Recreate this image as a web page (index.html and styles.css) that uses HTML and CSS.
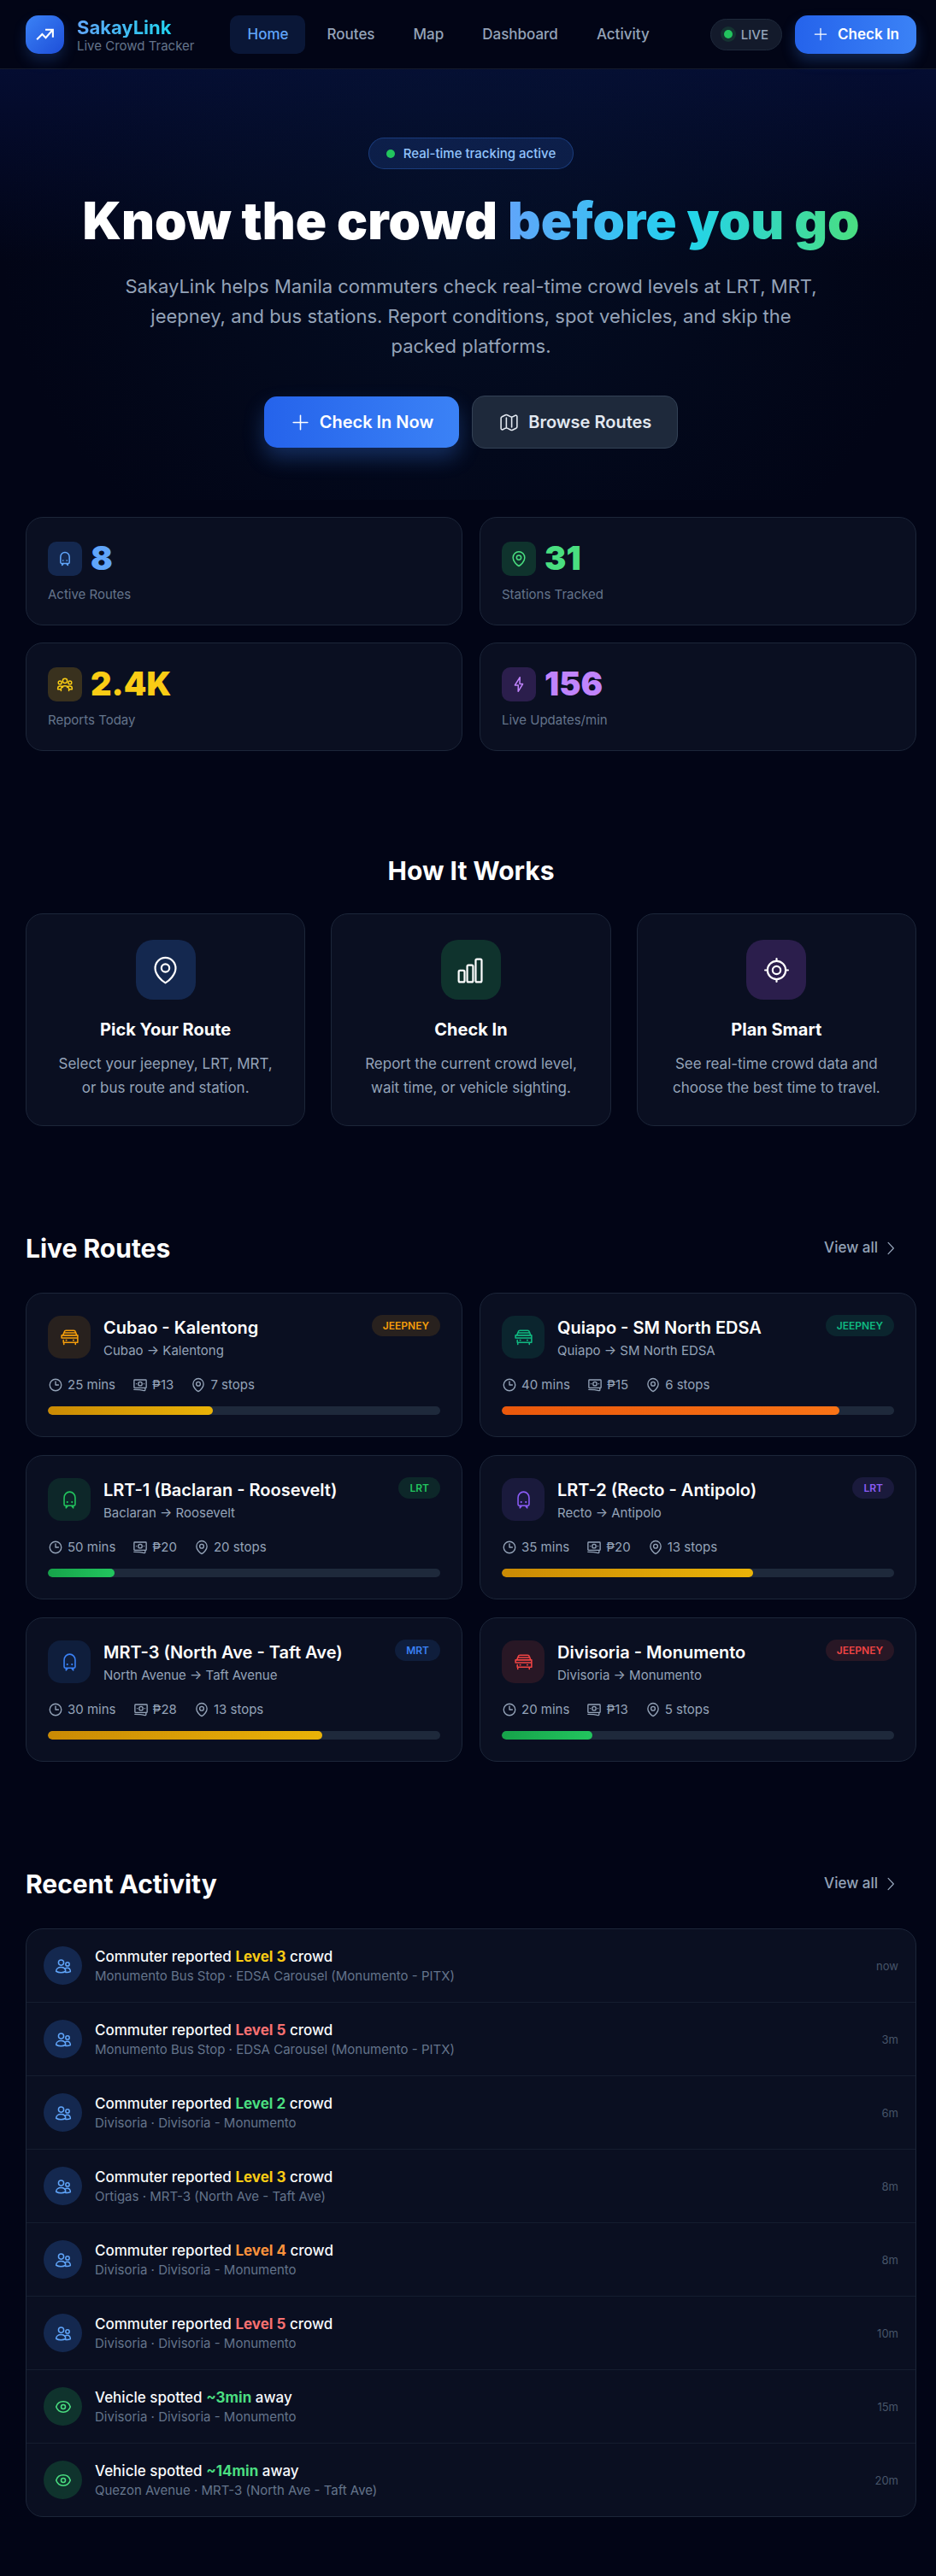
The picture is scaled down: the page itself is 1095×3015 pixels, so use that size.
FILE: index.html
```html
<!DOCTYPE html>
<html lang="en">
<head>
    <meta charset="UTF-8">
    <meta name="viewport" content="width=device-width, initial-scale=1.0">
    <title>SakayLink - Live Crowd Tracker</title>
    <link rel="stylesheet" href="styles.css">
</head>
<body>
    <!-- Icon set -->
    <svg class="sprite" aria-hidden="true">
        <symbol id="i-trend" viewBox="0 0 24 24"><path d="M3 17.5l6-6 4 4 7.5-8.5M12.500 6.500H21V15"/></symbol>
        <symbol id="i-plus" viewBox="0 0 24 24"><path d="M12 4v16M4 12h16"/></symbol>
        <symbol id="i-map" viewBox="0 0 24 24"><path d="M9 6.8v10.4M15 6.8v10.4M3 7.2c0-.8.4-1.4 1.1-1.7L8 3.6c.6-.3 1.3-.3 2 0l4 2c.6.3 1.3.3 2 0l3-1.500c.9-.5 2 .2 2 1.200v11.500c0 .8-.4 1.400-1.100 1.700L16 20.400c-.6.3-1.300.3-2 0l-4-2c-.6-.3-1.300-.3-2 0l-3 1.500c-.9.500-2-.2-2-1.200z"/></symbol>
        <symbol id="i-train" viewBox="0 0 24 24"><path d="M5.800 9.500a6.200 6.500 0 0 1 12.400 0V17a1.500 1.500 0 0 1-1.500 1.500H7.300A1.500 1.500 0 0 1 5.800 17zM8 18.500v2.500l2-2.500M16 18.500v2.500l-2-2.500"/><path d="M9.300 14.500h.1M14.600 14.500h.1" stroke-width="2"/></symbol>
        <symbol id="i-bus" viewBox="0 0 24 24"><path d="M4.500 9.500L6 5.500A2 2 0 0 1 8 4h8.500a2 2 0 0 1 2 1.500L20 9.500M6 6.800h12.500M3 12.500v-3h18v3zM21 12.500v5H5v-2.500M5.500 17.500v2.200M18.500 17.500v2.200M8 15h.5M16 15h.5"/></symbol>
        <symbol id="i-pin" viewBox="0 0 24 24"><circle cx="12" cy="10.300" r="3.200"/><path d="M20.200 10.500C20.200 15.600 15 20.500 12 22.200 9 20.500 3.800 15.600 3.800 10.500a8.200 8.500 0 0 1 16.400 0z"/></symbol>
        <symbol id="i-group" viewBox="0 0 24 24"><circle cx="12" cy="7" r="3.200"/><circle cx="5" cy="9.500" r="2.300"/><circle cx="19" cy="9.500" r="2.300"/><path d="M6.500 21v-2.500C6.500 15.800 9 14 12 14s5.500 1.800 5.500 4.500V21M2 19v-1.500C2 15.600 3.600 14.500 5.500 14.500c1.500 0 3 .6 3.500 1.700M22 19v-1.500c0-1.900-1.600-3-3.500-3-1.500 0-3 .6-3.500 1.700M2 19h4.500M17.500 19H22"/></symbol>
        <symbol id="i-bolt" viewBox="0 0 24 24"><path d="M13.500 2L6.500 13.200h4.700L11 22l6.500-10.500h-4.300z"/></symbol>
        <symbol id="i-bars" viewBox="0 0 24 24"><rect x="2.500" y="12.300" width="4.700" height="9.200" rx="1"/><rect x="9.300" y="8" width="4.700" height="13.500" rx="1"/><rect x="16.100" y="3.200" width="4.800" height="18.300" rx="1"/></symbol>
        <symbol id="i-target" viewBox="0 0 24 24"><circle cx="12" cy="12" r="7.300"/><circle cx="12" cy="12" r="3.200"/><path d="M12 2.800v2M12 19.200v2M2.800 12h2M19.200 12h2"/></symbol>
        <symbol id="i-chevron" viewBox="0 0 24 24"><path d="M8.500 4l7.500 8-7.500 8"/></symbol>
        <symbol id="i-clock" viewBox="0 0 24 24"><circle cx="12" cy="12" r="9"/><path d="M12 6.500V12h4.500"/></symbol>
        <symbol id="i-cash" viewBox="0 0 24 24"><rect x="2.500" y="4" width="19" height="12.500" rx="1"/><circle cx="12" cy="10.200" r="3"/><path d="M2.500 19.200c6 0 11 .3 15.500 1.600 1 .3 1.800-.2 1.800-1.100v-3M6 10.200h.2M17.800 10.200h.2"/></symbol>
        <symbol id="i-users" viewBox="0 0 24 24"><circle cx="9" cy="7.300" r="3.700"/><circle cx="18" cy="9.500" r="2.600"/><path d="M2 19.500c0-3.500 3-5.700 6.800-5.700s6.500 2.200 6.500 5.700c-1.900 1.100-4 1.700-6.500 1.700S3.900 20.600 2 19.500zM15.300 20.900c2.400.3 4.800 0 6.700-.9.200-3.300-1.600-5.200-4.300-5.200-1.400 0-2.600.5-3.400 1.300"/></symbol>
        <symbol id="i-eye" viewBox="0 0 24 24"><path d="M2.200 12.400a1 1 0 0 1 0-.8C3.600 7.500 7.500 4.600 12 4.600s8.400 2.900 9.800 7a1 1 0 0 1 0 .8c-1.400 4.100-5.300 7-9.800 7s-8.400-2.900-9.800-7z"/><circle cx="12" cy="12" r="3"/></symbol>
    </svg>

    <header class="header">
        <a class="brand" href="#">
            <span class="brand-logo"><svg class="icon icon-lg"><use href="#i-trend"/></svg></span>
            <span class="brand-text">
                <span class="brand-name">SakayLink</span>
                <span class="brand-sub">Live Crowd Tracker</span>
            </span>
        </a>
        <nav class="nav">
            <a class="nav-link active" href="#">Home</a>
            <a class="nav-link" href="#routes">Routes</a>
            <a class="nav-link" href="#map">Map</a>
            <a class="nav-link" href="#dashboard">Dashboard</a>
            <a class="nav-link" href="#activity">Activity</a>
        </nav>
        <div class="header-actions">
            <span class="live-pill"><span class="dot dot-ring"></span>LIVE</span>
            <button class="btn btn-primary" type="button"><svg class="icon icon-md"><use href="#i-plus"/></svg>Check In</button>
        </div>
    </header>

    <section class="hero">
        <div class="hero-badge"><span class="dot"></span>Real-time tracking active</div>
        <h1>Know the crowd <span class="gradient-text">before you go</span></h1>
        <p>SakayLink helps Manila commuters check real-time crowd levels at LRT, MRT, jeepney, and bus stations. Report conditions, spot vehicles, and skip the packed platforms.</p>
        <div class="hero-actions">
            <button class="btn btn-primary btn-lg" type="button"><svg class="icon icon-lg"><use href="#i-plus"/></svg>Check In Now</button>
            <button class="btn btn-secondary btn-lg" type="button"><svg class="icon icon-lg"><use href="#i-map"/></svg>Browse Routes</button>
        </div>
    </section>

    <main>
        <section class="stats">
            <div class="card">
                <div class="stat-top blue"><span class="stat-icon"><svg class="icon icon-md bold"><use href="#i-train"/></svg></span><span class="stat-value">8</span></div>
                <div class="stat-label">Active Routes</div>
            </div>
            <div class="card">
                <div class="stat-top green"><span class="stat-icon"><svg class="icon icon-md bold"><use href="#i-pin"/></svg></span><span class="stat-value">31</span></div>
                <div class="stat-label">Stations Tracked</div>
            </div>
            <div class="card">
                <div class="stat-top yellow"><span class="stat-icon"><svg class="icon icon-md bold"><use href="#i-group"/></svg></span><span class="stat-value">2.4K</span></div>
                <div class="stat-label">Reports Today</div>
            </div>
            <div class="card">
                <div class="stat-top purple"><span class="stat-icon"><svg class="icon icon-md bold"><use href="#i-bolt"/></svg></span><span class="stat-value">156</span></div>
                <div class="stat-label">Live Updates/min</div>
            </div>
        </section>

        <section class="section">
            <h2 class="center">How It Works</h2>
            <div class="steps">
                <div class="card step">
                    <div class="step-icon blue"><svg class="icon icon-xl"><use href="#i-pin"/></svg></div>
                    <h3>Pick Your Route</h3>
                    <p>Select your jeepney, LRT, MRT, or bus route and station.</p>
                </div>
                <div class="card step">
                    <div class="step-icon green"><svg class="icon icon-xl"><use href="#i-bars"/></svg></div>
                    <h3>Check In</h3>
                    <p>Report the current crowd level, wait time, or vehicle sighting.</p>
                </div>
                <div class="card step">
                    <div class="step-icon purple"><svg class="icon icon-xl"><use href="#i-target"/></svg></div>
                    <h3>Plan Smart</h3>
                    <p>See real-time crowd data and choose the best time to travel.</p>
                </div>
            </div>
        </section>

        <section class="section" id="routes">
            <div class="section-head">
                <h2>Live Routes</h2>
                <a class="view-all" href="#routes">View all<svg class="icon icon-md"><use href="#i-chevron"/></svg></a>
            </div>
            <div class="routes">
                <article class="card route amber">
                    <div class="route-head">
                        <span class="route-icon"><svg class="icon icon-lg"><use href="#i-bus"/></svg></span>
                        <div class="route-title"><h3>Cubao - Kalentong</h3><p>Cubao → Kalentong</p></div>
                        <span class="tag">JEEPNEY</span>
                    </div>
                    <div class="route-meta">
                        <span><svg class="icon icon-sm bold"><use href="#i-clock"/></svg>25 mins</span>
                        <span><svg class="icon icon-sm bold"><use href="#i-cash"/></svg>₱13</span>
                        <span><svg class="icon icon-sm bold"><use href="#i-pin"/></svg>7 stops</span>
                    </div>
                    <div class="bar"><div class="bar-fill level-mid" style="width: 42%"></div></div>
                </article>
                <article class="card route emerald">
                    <div class="route-head">
                        <span class="route-icon"><svg class="icon icon-lg"><use href="#i-bus"/></svg></span>
                        <div class="route-title"><h3>Quiapo - SM North EDSA</h3><p>Quiapo → SM North EDSA</p></div>
                        <span class="tag">JEEPNEY</span>
                    </div>
                    <div class="route-meta">
                        <span><svg class="icon icon-sm bold"><use href="#i-clock"/></svg>40 mins</span>
                        <span><svg class="icon icon-sm bold"><use href="#i-cash"/></svg>₱15</span>
                        <span><svg class="icon icon-sm bold"><use href="#i-pin"/></svg>6 stops</span>
                    </div>
                    <div class="bar"><div class="bar-fill level-high" style="width: 86%"></div></div>
                </article>
                <article class="card route lime">
                    <div class="route-head">
                        <span class="route-icon"><svg class="icon icon-lg"><use href="#i-train"/></svg></span>
                        <div class="route-title"><h3>LRT-1 (Baclaran - Roosevelt)</h3><p>Baclaran → Roosevelt</p></div>
                        <span class="tag">LRT</span>
                    </div>
                    <div class="route-meta">
                        <span><svg class="icon icon-sm bold"><use href="#i-clock"/></svg>50 mins</span>
                        <span><svg class="icon icon-sm bold"><use href="#i-cash"/></svg>₱20</span>
                        <span><svg class="icon icon-sm bold"><use href="#i-pin"/></svg>20 stops</span>
                    </div>
                    <div class="bar"><div class="bar-fill level-low" style="width: 17%"></div></div>
                </article>
                <article class="card route violet">
                    <div class="route-head">
                        <span class="route-icon"><svg class="icon icon-lg"><use href="#i-train"/></svg></span>
                        <div class="route-title"><h3>LRT-2 (Recto - Antipolo)</h3><p>Recto → Antipolo</p></div>
                        <span class="tag">LRT</span>
                    </div>
                    <div class="route-meta">
                        <span><svg class="icon icon-sm bold"><use href="#i-clock"/></svg>35 mins</span>
                        <span><svg class="icon icon-sm bold"><use href="#i-cash"/></svg>₱20</span>
                        <span><svg class="icon icon-sm bold"><use href="#i-pin"/></svg>13 stops</span>
                    </div>
                    <div class="bar"><div class="bar-fill level-mid" style="width: 64%"></div></div>
                </article>
                <article class="card route azure">
                    <div class="route-head">
                        <span class="route-icon"><svg class="icon icon-lg"><use href="#i-train"/></svg></span>
                        <div class="route-title"><h3>MRT-3 (North Ave - Taft Ave)</h3><p>North Avenue → Taft Avenue</p></div>
                        <span class="tag">MRT</span>
                    </div>
                    <div class="route-meta">
                        <span><svg class="icon icon-sm bold"><use href="#i-clock"/></svg>30 mins</span>
                        <span><svg class="icon icon-sm bold"><use href="#i-cash"/></svg>₱28</span>
                        <span><svg class="icon icon-sm bold"><use href="#i-pin"/></svg>13 stops</span>
                    </div>
                    <div class="bar"><div class="bar-fill level-mid" style="width: 70%"></div></div>
                </article>
                <article class="card route red">
                    <div class="route-head">
                        <span class="route-icon"><svg class="icon icon-lg"><use href="#i-bus"/></svg></span>
                        <div class="route-title"><h3>Divisoria - Monumento</h3><p>Divisoria → Monumento</p></div>
                        <span class="tag">JEEPNEY</span>
                    </div>
                    <div class="route-meta">
                        <span><svg class="icon icon-sm bold"><use href="#i-clock"/></svg>20 mins</span>
                        <span><svg class="icon icon-sm bold"><use href="#i-cash"/></svg>₱13</span>
                        <span><svg class="icon icon-sm bold"><use href="#i-pin"/></svg>5 stops</span>
                    </div>
                    <div class="bar"><div class="bar-fill level-low" style="width: 23%"></div></div>
                </article>
            </div>
        </section>

        <section class="section" id="activity">
            <div class="section-head">
                <h2>Recent Activity</h2>
                <a class="view-all" href="#activity">View all<svg class="icon icon-md"><use href="#i-chevron"/></svg></a>
            </div>
            <ul class="feed">
                <li>
                    <span class="feed-icon blue"><svg class="icon icon-md bold"><use href="#i-users"/></svg></span>
                    <div class="feed-text"><h4>Commuter reported <strong class="lv3">Level 3</strong> crowd</h4><p>Monumento Bus Stop · EDSA Carousel (Monumento - PITX)</p></div>
                    <time>now</time>
                </li>
                <li>
                    <span class="feed-icon blue"><svg class="icon icon-md bold"><use href="#i-users"/></svg></span>
                    <div class="feed-text"><h4>Commuter reported <strong class="lv5">Level 5</strong> crowd</h4><p>Monumento Bus Stop · EDSA Carousel (Monumento - PITX)</p></div>
                    <time>3m</time>
                </li>
                <li>
                    <span class="feed-icon blue"><svg class="icon icon-md bold"><use href="#i-users"/></svg></span>
                    <div class="feed-text"><h4>Commuter reported <strong class="lv2">Level 2</strong> crowd</h4><p>Divisoria · Divisoria - Monumento</p></div>
                    <time>6m</time>
                </li>
                <li>
                    <span class="feed-icon blue"><svg class="icon icon-md bold"><use href="#i-users"/></svg></span>
                    <div class="feed-text"><h4>Commuter reported <strong class="lv3">Level 3</strong> crowd</h4><p>Ortigas · MRT-3 (North Ave - Taft Ave)</p></div>
                    <time>8m</time>
                </li>
                <li>
                    <span class="feed-icon blue"><svg class="icon icon-md bold"><use href="#i-users"/></svg></span>
                    <div class="feed-text"><h4>Commuter reported <strong class="lv4">Level 4</strong> crowd</h4><p>Divisoria · Divisoria - Monumento</p></div>
                    <time>8m</time>
                </li>
                <li>
                    <span class="feed-icon blue"><svg class="icon icon-md bold"><use href="#i-users"/></svg></span>
                    <div class="feed-text"><h4>Commuter reported <strong class="lv5">Level 5</strong> crowd</h4><p>Divisoria · Divisoria - Monumento</p></div>
                    <time>10m</time>
                </li>
                <li>
                    <span class="feed-icon green"><svg class="icon icon-md bold"><use href="#i-eye"/></svg></span>
                    <div class="feed-text"><h4>Vehicle spotted <strong class="lv2">~3min</strong> away</h4><p>Divisoria · Divisoria - Monumento</p></div>
                    <time>15m</time>
                </li>
                <li>
                    <span class="feed-icon green"><svg class="icon icon-md bold"><use href="#i-eye"/></svg></span>
                    <div class="feed-text"><h4>Vehicle spotted <strong class="lv2">~14min</strong> away</h4><p>Quezon Avenue · MRT-3 (North Ave - Taft Ave)</p></div>
                    <time>20m</time>
                </li>
            </ul>
        </section>
    </main>
</body>
</html>
```

FILE: styles.css
```css
* {
    box-sizing: border-box;
    margin: 0;
    padding: 0;
}

body {
    font-family: Inter, "Liberation Sans", sans-serif;
    font-size: 15px;
    line-height: 20px;
    color: #fff;
    background: #020516;
}

a {
    color: inherit;
    text-decoration: none;
}

.sprite {
    display: none;
}

.icon {
    fill: none;
    stroke: currentColor;
    stroke-width: 1.5;
    stroke-linecap: round;
    stroke-linejoin: round;
    flex-shrink: 0;
}

.icon.bold {
    stroke-width: 1.8;
}

.icon-sm { width: 18px; height: 18px; }
.icon-md { width: 20px; height: 20px; }
.icon-lg { width: 25px; height: 25px; }
.icon-xl { width: 35px; height: 35px; }

.dot {
    width: 10px;
    height: 10px;
    border-radius: 50%;
    background: #22c55e;
}

.dot-ring {
    box-shadow: 0 0 0 4px rgba(34, 197, 94, 0.15);
}

/* Header */
.header {
    display: flex;
    align-items: center;
    height: 81px;
    padding: 0 23px 0 30px;
    border-bottom: 1px solid #151b2b;
}

.brand {
    display: flex;
    align-items: center;
    gap: 15px;
    margin-right: 42px;
}

.brand-logo {
    display: flex;
    align-items: center;
    justify-content: center;
    width: 45px;
    height: 45px;
    border-radius: 15px;
    background: linear-gradient(135deg, #3b82f6, #1d4ed8);
    box-shadow: 0 8px 16px rgba(59, 130, 246, 0.2);
}

.brand-logo .icon {
    stroke-width: 2;
    stroke-linecap: butt;
    stroke-linejoin: miter;
}

.brand-text {
    display: flex;
    flex-direction: column;
    padding-top: 4px;
}

.brand-name {
    font-size: 22px;
    line-height: 23px;
    font-weight: 700;
    align-self: flex-start;
    background: linear-gradient(90deg, #60a5fa, #22d3ee);
    background-clip: text;
    -webkit-background-clip: text;
    color: transparent;
}

.brand-sub {
    color: #64748b;
}

.nav {
    display: flex;
    gap: 5px;
}

.nav-link {
    padding: 10px 20px;
    border-radius: 10px;
    font-size: 17px;
    line-height: 25px;
    font-weight: 500;
    color: #94a3b8;
}

.nav-link.active {
    color: #60a5fa;
    background: rgba(59, 130, 246, 0.15);
}

.header-actions {
    display: flex;
    align-items: center;
    gap: 15px;
    margin-left: auto;
}

.live-pill {
    display: flex;
    align-items: center;
    gap: 10px;
    padding: 8px 15px;
    border: 1px solid #1e293b;
    border-radius: 20px;
    background: #131a2b;
    line-height: 19px;
    font-weight: 500;
    color: #94a3b8;
}

/* Buttons */
.btn {
    display: flex;
    align-items: center;
    gap: 10px;
    padding: 10px 20px;
    border: none;
    border-radius: 15px;
    font-family: inherit;
    font-size: 17px;
    line-height: 25px;
    font-weight: 600;
    color: #fff;
    cursor: pointer;
}

.btn-primary {
    background: linear-gradient(90deg, #2563eb, #3b82f6);
    box-shadow: 0 8px 16px rgba(59, 130, 246, 0.25);
}

.btn-secondary {
    background: #1e293b;
    border: 1px solid #334155;
    color: #e2e8f0;
}

.btn-lg {
    padding: 15px 30px;
    font-size: 20px;
    line-height: 30px;
}

.btn-lg.btn-primary {
    box-shadow: 0 12px 24px rgba(59, 130, 246, 0.3);
}

/* Hero */
.hero {
    display: flex;
    flex-direction: column;
    align-items: center;
    padding: 80px 23px 60px 30px;
    text-align: center;
    background:
        radial-gradient(ellipse 50% 90% at 50% 40%, rgba(8, 30, 60, 0.35), transparent),
        linear-gradient(rgba(12, 35, 130, 0.25), transparent 45%);
}

.hero-badge {
    display: flex;
    align-items: center;
    gap: 10px;
    padding: 8px 20px;
    border: 1px solid rgba(59, 130, 246, 0.3);
    border-radius: 20px;
    background: rgba(59, 130, 246, 0.15);
    line-height: 19px;
    font-weight: 500;
    color: #93c5fd;
}

.hero h1 {
    margin-top: 30px;
    font-size: 60px;
    line-height: 60px;
    font-weight: 900;
}

.gradient-text {
    background: linear-gradient(90deg, #60a5fa, #22d3ee, #4ade80);
    background-clip: text;
    -webkit-background-clip: text;
    color: transparent;
}

.hero p {
    max-width: 820px;
    margin-top: 30px;
    font-size: 22px;
    line-height: 35px;
    color: #94a3b8;
}

.hero-actions {
    display: flex;
    align-items: center;
    gap: 15px;
    margin-top: 40px;
}

main {
    padding: 20px 23px 70px 30px;
}

.card {
    padding: 25px;
    border: 1px solid #1c2639;
    border-radius: 20px;
    background: #0a0f21;
}

/* Colour pairs for icons */
.blue { color: #60a5fa; }
.green { color: #4ade80; }
.yellow { color: #facc15; }
.purple { color: #c084fc; }

.blue .stat-icon, .step-icon.blue, .feed-icon.blue { background: #14284f; }
.green .stat-icon, .step-icon.green, .feed-icon.green { background: #0f332d; }
.yellow .stat-icon { background: #39311e; }
.purple .stat-icon, .step-icon.purple { background: #2b1e4c; }

/* Stats */
.stats {
    display: grid;
    grid-template-columns: 1fr 1fr;
    gap: 20px;
}

.stat-top {
    display: flex;
    align-items: center;
    gap: 10px;
    margin-bottom: 10px;
}

.stat-icon {
    display: flex;
    align-items: center;
    justify-content: center;
    width: 40px;
    height: 40px;
    border-radius: 10px;
}

.stat-value {
    font-size: 38px;
    line-height: 45px;
    font-weight: 900;
}

.stat-label {
    color: #64748b;
}

/* Sections */
.section {
    margin-top: 120px;
}

h2 {
    font-size: 30px;
    line-height: 40px;
    font-weight: 700;
}

h2.center {
    margin-bottom: 30px;
    text-align: center;
}

.section-head {
    display: flex;
    align-items: center;
    justify-content: space-between;
    margin-bottom: 30px;
}

.view-all {
    display: flex;
    align-items: center;
    gap: 5px;
    padding: 10px 20px;
    font-size: 17px;
    line-height: 25px;
    font-weight: 500;
    color: #94a3b8;
}

/* How it works */
.steps {
    display: grid;
    grid-template-columns: repeat(3, 1fr);
    gap: 30px;
}

.step {
    padding: 30px;
    text-align: center;
}

.step-icon {
    display: flex;
    align-items: center;
    justify-content: center;
    width: 70px;
    height: 70px;
    margin: 0 auto 20px;
    border-radius: 20px;
}

.step-icon .icon {
    color: #fff;
}

.step h3 {
    margin-bottom: 11px;
    font-size: 20px;
    line-height: 30px;
    font-weight: 700;
}

.step p {
    font-size: 17px;
    line-height: 28px;
    color: #94a3b8;
}

/* Routes */
.routes {
    display: grid;
    grid-template-columns: 1fr 1fr;
    gap: 21px 20px;
}

.amber { --accent: #f59e0b; --tint: #28211e; }
.emerald { --accent: #10b981; --tint: #0b252e; }
.lime { --accent: #22c55e; --tint: #0d2729; }
.violet { --accent: #8b5cf6; --tint: #1a1a3c; }
.azure { --accent: #3b82f6; --tint: #0f1e3c; }
.red { --accent: #ef4444; --tint: #281725; }

.route-head {
    display: flex;
    align-items: center;
    gap: 15px;
}

.route-icon {
    display: flex;
    align-items: center;
    justify-content: center;
    width: 50px;
    height: 50px;
    border-radius: 15px;
    background: var(--tint);
    color: var(--accent);
}

.route-title {
    flex: 1;
}

.route-title h3 {
    margin-bottom: 2px;
    font-size: 20px;
    line-height: 30px;
    font-weight: 600;
}

.route-title p {
    color: #94a3b8;
}

.tag {
    align-self: flex-start;
    padding: 2px 13px;
    border-radius: 20px;
    background: var(--tint);
    color: var(--accent);
    font-size: 12px;
    line-height: 21px;
    font-weight: 600;
}

.route-meta {
    display: flex;
    gap: 20px;
    margin: 20px 0 15px;
    color: #94a3b8;
}

.route-meta span {
    display: flex;
    align-items: center;
    gap: 5px;
}

.bar {
    height: 10px;
    border-radius: 5px;
    background: #1e293b;
    overflow: hidden;
}

.bar-fill {
    height: 100%;
    border-radius: 5px;
}

.level-low { background: linear-gradient(90deg, #16a34a, #22c55e); }
.level-mid { background: linear-gradient(90deg, #ca8a04, #eab308); }
.level-high { background: linear-gradient(90deg, #ea580c, #f97316); }

/* Activity feed */
.feed {
    list-style: none;
    border: 1px solid #1c2639;
    border-radius: 20px;
    background: #0a0f21;
}

.feed li {
    display: flex;
    align-items: center;
    gap: 15px;
    padding: 20px;
    border-bottom: 1px solid #151d2f;
}

.feed li:last-child {
    border-bottom: none;
}

.feed-icon {
    display: flex;
    align-items: center;
    justify-content: center;
    width: 45px;
    height: 45px;
    border-radius: 50%;
}

.feed-text {
    flex: 1;
}

.feed-text h4 {
    font-size: 17px;
    line-height: 25px;
    font-weight: 500;
    color: #f8fafc;
}

.feed-text p {
    color: #64748b;
}

.feed time {
    font-size: 13px;
    color: #475569;
}

.feed strong { font-weight: 700; }
.lv2 { color: #4ade80; }
.lv3 { color: #facc15; }
.lv4 { color: #fb923c; }
.lv5 { color: #f87171; }
```
